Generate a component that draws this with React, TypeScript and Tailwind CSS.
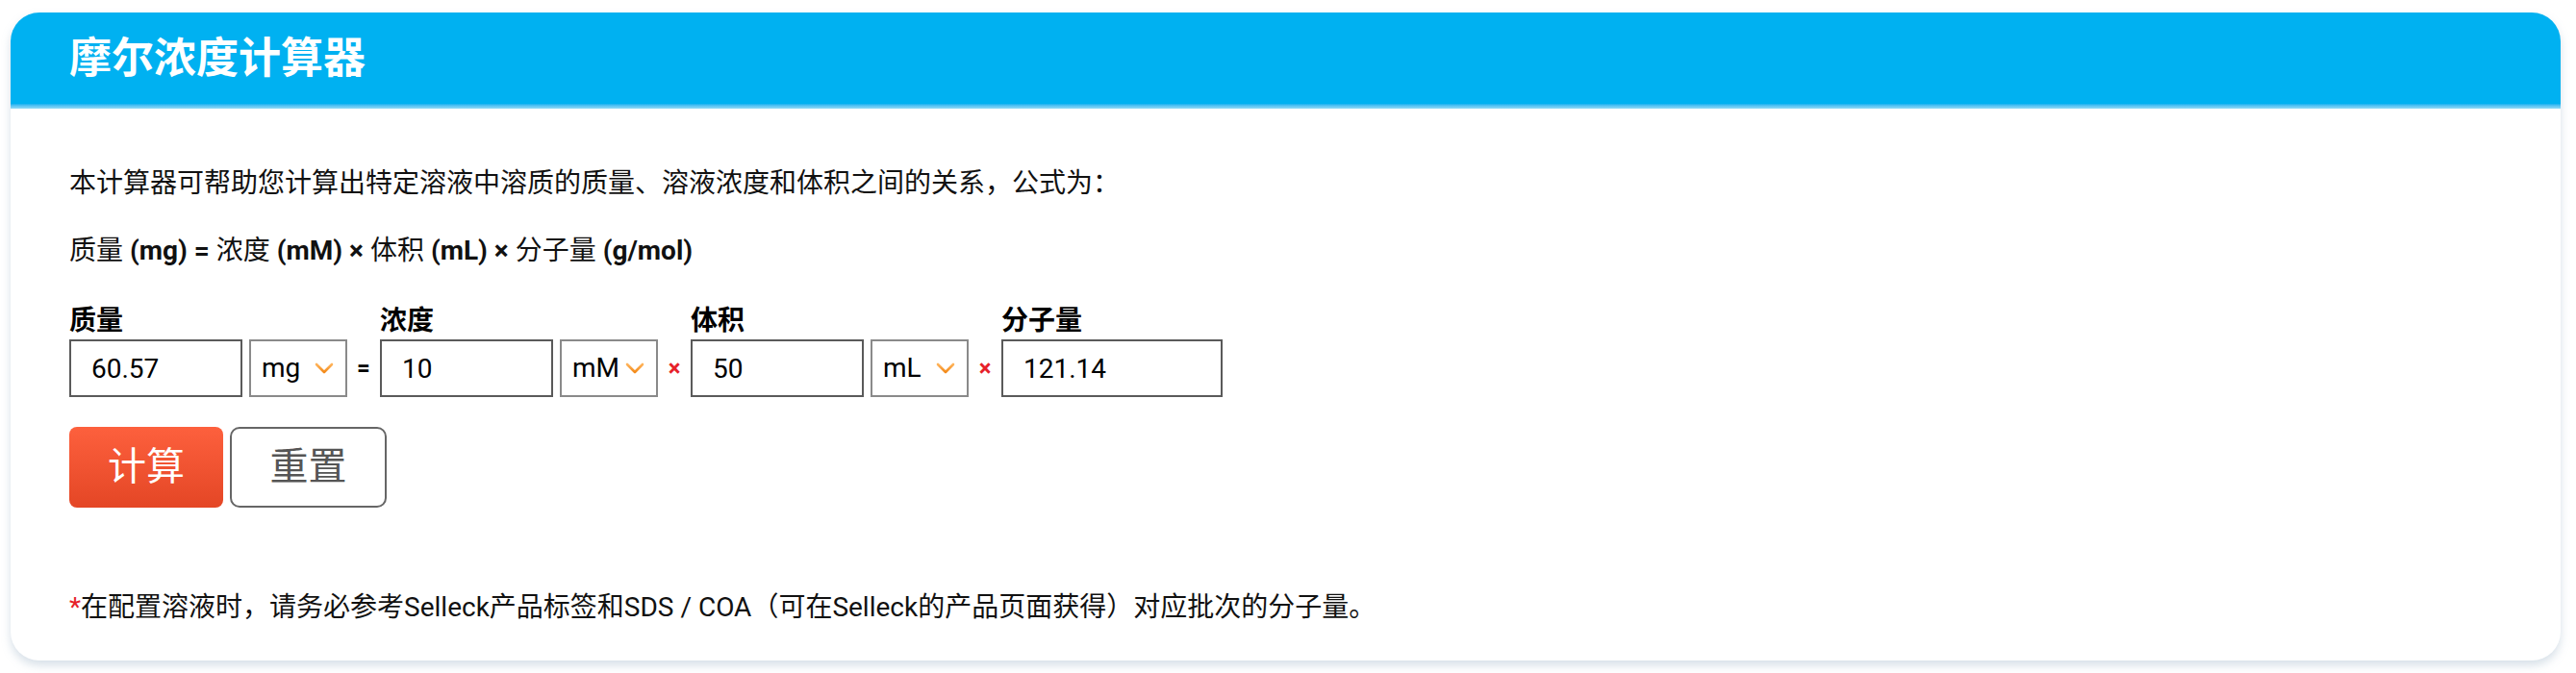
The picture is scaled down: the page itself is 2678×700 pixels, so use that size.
import React from "react";

/* Molarity calculator card — mass = concentration × volume × MW */

function Chevron() {
  return (
    <svg width="20" height="12" viewBox="0 0 20 12" className="shrink-0">
      <defs>
        <linearGradient id="chev" x1="0" y1="0" x2="0" y2="1">
          <stop offset="0" stopColor="#ffb45c" />
          <stop offset="1" stopColor="#f38a1a" />
        </linearGradient>
      </defs>
      <polyline points="2,2 10,10 18,2" fill="none" stroke="url(#chev)" strokeWidth="2.6" strokeLinecap="round" strokeLinejoin="round" />
    </svg>
  );
}

function Field({ label, value, unit, wide }: { label: string; value: string; unit?: string; wide?: boolean }) {
  return (
    <div className="flex flex-col">
      <label className="mb-[2px] text-[28px] font-bold leading-[34px] text-black">{label}</label>
      <div className="flex">
        <input
          defaultValue={value}
          className={
            wide
              ? "h-[60px] w-[230px] border-2 border-[#5a5a5a] pl-[21px] text-[28px] text-black outline-none"
              : "h-[60px] w-[180px] border-2 border-[#5a5a5a] pl-[21px] text-[28px] text-black outline-none"
          }
        />
        {unit && (
          <div className="ml-[7px] flex h-[60px] w-[102px] items-center justify-between border-2 border-[#8a8a8a] pl-[11px] pr-[12px] text-[28px] text-black">
            <span>{unit}</span>
            <Chevron />
          </div>
        )}
      </div>
    </div>
  );
}

function Op({ children, red }: { children: React.ReactNode; red?: boolean }) {
  return (
    <div
      className={
        red
          ? "flex h-[60px] w-[34px] items-center justify-center self-end text-[24px] font-bold text-[#e62129]"
          : "flex h-[60px] w-[34px] items-center justify-center self-end text-[24px] font-bold text-black"
      }
    >
      {children}
    </div>
  );
}

export default function App() {
  return (
    <div className="min-h-[700px] bg-white pl-[11px] pr-[16px] pt-[13px] font-['Roboto','Noto_Sans_CJK_SC',sans-serif]">
      <div className="overflow-hidden rounded-[30px] bg-white shadow-[0_5px_10px_rgba(140,165,190,0.35)]">
        <div className="bg-[#00b1f1]">
          <div className="flex h-[95px] items-center pl-[61px] text-[44px] font-bold text-white">摩尔浓度计算器</div>
          <div className="h-[5px] bg-linear-to-b from-[#00b1f1] to-[#92dbf6]" />
        </div>

        <div className="px-[61px] pb-[34px] pt-[57px] text-[28px] text-[#111]">
          <p className="leading-[42px]">本计算器可帮助您计算出特定溶液中溶质的质量、溶液浓度和体积之间的关系，公式为：</p>
          <p className="mt-[28px] leading-[42px]">
            质量 <b>(mg) =</b> 浓度 <b>(mM) ×</b> 体积 <b>(mL) ×</b> 分子量 <b>(g/mol)</b>
          </p>

          <div className="mt-[35px] flex">
            <Field label="质量" value="60.57" unit="mg" />
            <Op>=</Op>
            <Field label="浓度" value="10" unit="mM" />
            <Op red>×</Op>
            <Field label="体积" value="50" unit="mL" />
            <Op red>×</Op>
            <Field label="分子量" value="121.14" wide />
          </div>

          <div className="mt-[31px] flex gap-[7px]">
            <button className="h-[84px] w-[160px] rounded-[8px] bg-linear-to-b from-[#fd603d] to-[#e44625] text-[40px] text-white">
              计算
            </button>
            <button className="h-[84px] w-[163px] rounded-[10px] border-2 border-[#666] bg-white text-[40px] text-[#555]">
              重置
            </button>
          </div>

          <p className="mt-[83px] leading-[42px]">
            <span className="text-[#e62129]">*</span>
            在配置溶液时，请务必参考Selleck产品标签和SDS / COA（可在Selleck的产品页面获得）对应批次的分子量。
          </p>
        </div>
      </div>
    </div>
  );
}
